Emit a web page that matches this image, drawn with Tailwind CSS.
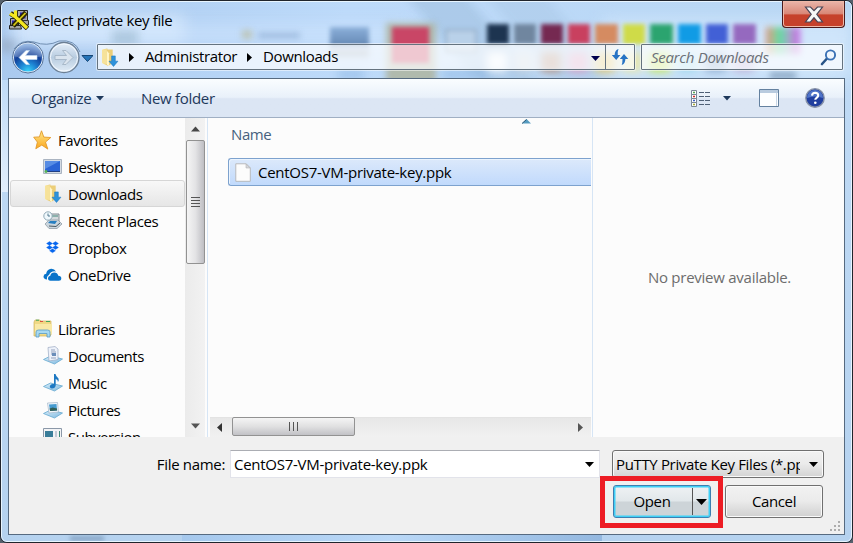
<!DOCTYPE html>
<html lang="en">
<head>
<meta charset="utf-8">
<title>Select private key file</title>
<script src="https://cdn.jsdelivr.net/npm/@tailwindcss/browser@4"></script>
</head>
<body class="overflow-hidden bg-[#55606c]">
<svg width="0" height="0" class="absolute">
  <defs>
    <linearGradient id="fold" x1="0" x2="1"><stop offset="0" stop-color="#fbeeb0"/><stop offset="1" stop-color="#e2bf60"/></linearGradient>
    <linearGradient id="gold" x1="0" x2="0" y2="1"><stop offset="0" stop-color="#ffe98c"/><stop offset="1" stop-color="#fba61c"/></linearGradient>
    <linearGradient id="tray" x1="0" x2="1" y2="1"><stop offset="0" stop-color="#d8eefa"/><stop offset="1" stop-color="#7fb8df"/></linearGradient>
    <radialGradient id="orb" cx=".5" cy="1" r=".95"><stop offset="0" stop-color="#38d6fb"/><stop offset=".35" stop-color="#1c7fd0"/><stop offset=".65" stop-color="#123f97"/><stop offset="1" stop-color="#7ba4dc"/></radialGradient>
    <linearGradient id="clear" x1="0" x2="0" y2="1"><stop offset="0" stop-color="#e7f0fa"/><stop offset=".5" stop-color="#b8cce0"/><stop offset="1" stop-color="#e2edf7"/></linearGradient>
    <symbol id="download" viewBox="0 0 18 18">
      <path d="M2 1.500 7 .5v16l-5-2z" fill="url(#fold)"/>
      <path d="M6.500 1.500H12v13L7 17.300z" fill="#ecce78"/>
      <path d="M2 1.800 6.500 1v14.500L2 14z" fill="#f6e29a"/>
      <path d="M6.500 2.500 8.500 5v12l-2-1z" fill="#fff5c8"/>
      <path d="M11 7.500h3.500v5H17L12.800 17.500 8.500 12.500H11z" fill="#2e93dc" stroke="#1b78bd" stroke-width=".5"/>
    </symbol>
  </defs>
</svg>
<div class="relative flex h-[543px] w-[853px] flex-col overflow-hidden rounded-[7px] border border-[#20242c] bg-[#bcd8f4] font-['Open_Sans','Segoe_UI',sans-serif] text-[15px] leading-[20px] tracking-[-0.36px] text-black">
  <!-- frosted glass frame with the blurred toolbar behind it -->
  <div class="absolute inset-0 overflow-hidden rounded-[6px] border border-[#e8f5ff] bg-linear-to-b from-[#b4d3f4] via-[#bfdaf5] via-10% to-[#b5d2ef]">
    <div class="absolute left-0 top-0 h-[78px] w-full bg-linear-[100deg] from-[#a9c9ee] from-0% via-[#bddafa] via-40% to-[#b9d7f3]"></div>
    <div class="absolute left-[430px] top-[-30px] h-[110px] w-[60px] skew-x-[40deg] bg-[#9bbcdc]/50 blur-[6px]"></div>
    <div class="absolute left-[510px] top-[-30px] h-[110px] w-[60px] skew-x-[40deg] bg-[#a5c4e2]/40 blur-[6px]"></div>
    <div class="absolute left-[600px] top-[18px] h-[60px] w-[250px] bg-[#d5e8fc]/80 blur-[8px]"></div>
    <div class="absolute left-[12px] top-[14px] h-[26px] w-[170px] bg-[#deedfe]/80 blur-[8px]"></div>
    <div class="absolute left-[12px] top-[22px] h-[20px] w-[400px] bg-[#d0e5fd]/60 blur-[8px]"></div>
    <div class="absolute left-[-2px] top-[37px] h-[13px] w-[15px] bg-[#8b97a9]/50 blur-[5px]"></div>
    <div class="absolute left-[110px] top-[28px] h-[16px] w-[26px] bg-[#a3bfd6]/70 blur-[4px]"></div>
    <div class="absolute left-[240px] top-[28px] h-[9px] w-[10px] bg-[#b7b68f]/60 blur-[3px]"></div>
    <div class="absolute left-[256px] top-[31px] h-[5px] w-[42px] bg-[#7b9dc6]/60 blur-[3px]"></div>
    <div class="absolute left-[328px] top-[25px] h-[20px] w-[39px] bg-linear-to-b from-[#8cb0da] to-[#6387b3] blur-[2px]"></div>
    <div class="absolute left-[328px] top-[47px] h-[8px] w-[39px] bg-[#91a1b1]/80 blur-[3px]"></div>
    <div class="absolute left-[384px] top-[21px] h-[62px] w-[50px] bg-[#acb19a]/80 blur-[3px]"></div>
    <div class="absolute left-[390px] top-[25px] h-[36px] w-[37px] bg-[#c94666] blur-[2px]"></div>
    <div class="absolute left-[443px] top-[27px] h-[24px] w-[32px] border-2 border-[#829cb8]/60 bg-[#bdd2e9]/80 blur-[2px]"></div>
    <div class="absolute left-[336px] top-[69px] h-[7px] w-[26px] bg-[#81addd]/60 blur-[4px]"></div>
    <div class="absolute left-[440px] top-[69px] h-[7px] w-[50px] bg-[#81addd]/60 blur-[4px]"></div>
    <div class="absolute left-[485px] top-[50px] flex gap-[7px] blur-[4px]">
      <i class="h-5 w-[20px] bg-[#eff6fd]"></i><i class="h-5 w-[20px] bg-[#c9d6e3]"></i><i class="h-5 w-[20px] bg-[#b79787]"></i><i class="h-5 w-[20px] bg-[#d9a3c5]"></i><i class="h-5 w-[20px] bg-[#e2c870]"></i><i class="h-5 w-[20px] bg-[#e6e7b0]"></i><i class="h-5 w-[21px] bg-[#c5e85f]"></i><i class="h-5 w-[21px] bg-[#a1d8ec]"></i><i class="h-5 w-[21px] bg-[#8faed1]"></i><i class="h-5 w-[21px] bg-[#bcb4d9]"></i>
    </div>
    <div class="absolute left-[485px] top-[22px] flex gap-[5px] blur-[2px]">
      <i class="h-[20px] w-[22px] bg-[#1d3450]"></i><i class="h-[20px] w-[22px] bg-[#70869f]"></i><i class="h-[20px] w-[22px] bg-[#752951]"></i><i class="h-[20px] w-[22px] bg-[#c9405f]"></i><i class="h-[20px] w-[23px] bg-[#d58b61]"></i><i class="h-[20px] w-[22px] bg-[#cfdb48]"></i><i class="h-[20px] w-[23px] bg-[#2ba46f]"></i><i class="h-[20px] w-[23px] bg-[#109be5]"></i><i class="h-[20px] w-[22px] bg-[#4260d6]"></i><i class="h-[20px] w-[23px] bg-[#9569bf]"></i>
    </div>
    <div class="absolute left-[764px] top-[25px] h-[27px] w-[34px] bg-linear-to-r from-[#d9917e] via-[#54dda3] via-40% to-[#c95ce6] blur-[3px]"></div>
    <div class="absolute left-[768px] top-[70px] h-[7px] w-[26px] bg-[#7d9ab8]/80 blur-[3px]"></div>
    <div class="absolute left-0 top-[78px] h-[112px] w-[8px] bg-linear-to-b from-[#c0dbf6] to-[#e1eefc]"></div>
    <div class="absolute bottom-0 left-[68px] h-[5px] w-[34px] bg-[#7e9cbd]/80 blur-[2px]"></div>
    <div class="absolute bottom-0 left-[180px] h-[8px] w-[420px] bg-linear-to-r from-[#9fc4ec] via-[#bbdafa] to-[#86add9] opacity-70"></div>
  </div>

  <header class="relative h-[77px] shrink-0">
    <div class="flex h-[38px] items-start justify-between">
      <div class="flex h-[38px] items-center gap-[5px] pl-[8px]">
        <svg width="20" height="20" viewBox="0 0 20 20">
          <path d="M8.500 .5h10V10.500h-10z" fill="#a9a9ae" stroke="#222"/><path d="M11 2.500h5.500v6H11z" fill="#2323b8"/>
          <path d="M1.500 8.500h8v8h-8z" fill="#a9a9ae" stroke="#222"/><path d="M3 10.500h4v4H3z" fill="#2323b8"/>
          <path d="M.500 15.500h11l1 3.500H.500z" fill="#a4a4a4" stroke="#222"/><path d="M11.500 10.500h8V15h-7z" fill="#a4a4a4" stroke="#333"/>
          <path d="M5 5.500 18.500 18.500M17 2.500 4 16M1.500 3.500 5 5.500" fill="none" stroke="#2b2604" stroke-width="5"/>
          <path d="M16.500 3 4.500 15.500" stroke="#d9cb18" stroke-width="1.800"/>
          <path d="M5 5.500 18 18M1 3.500 5.500 6.500M6.500 .5V6" fill="none" stroke="#f4e71e" stroke-width="3.200"/>
        </svg>
        <h1 class="tracking-[-0.36px]">Select private key file</h1>
      </div>
      <button class="mr-[7px] flex h-[27px] w-[63px] items-center justify-center rounded-b-[4px] border border-t-0 border-[#4a1a1c] bg-linear-to-b from-[#e9b5aa] from-0% via-[#d98878] via-48% to-[#c6412b] to-54% shadow-[inset_0_0_0_1px_#eeb9a8]">
        <svg width="20" height="17" viewBox="0 0 20 17"><path d="M1.500 1h5L10 4.700 13.500 1h5l-5.700 7.300 5.700 7.700h-5L10 11.800 6.500 16h-5l5.700-7.700z" fill="#f7f7f7" stroke="#4b4657" stroke-width="1.200"/></svg>
      </button>
    </div>
    <div class="flex items-start pl-[10px]">
      <svg class="-mt-px" width="82" height="36" viewBox="0 0 82 36">
        <path d="M3 11Q10 1 23 4Q36 9 48 3Q64 1 69 14" fill="none" stroke="#718fb2" stroke-width="1"/>
        <circle cx="17" cy="19.500" r="15.500" fill="#dce9f7" stroke="#577399"/><circle cx="17" cy="19.500" r="14" fill="url(#orb)"/>
        <path d="M3.500 18.500a13.500 13.500 0 0 1 27 0Q17 21 3.500 18.500z" fill="#fff" opacity=".22"/>
        <path d="M8 19.500 15 12.500h3.500L14.500 17.500H26v4H14.500l4 5H15z" fill="#fff" stroke="#c5dcf4" stroke-width=".6"/>
        <circle cx="53" cy="19.500" r="15" fill="url(#clear)" stroke="#6c7f94" stroke-width="1.300"/><circle cx="53" cy="19.500" r="13.600" fill="none" stroke="#f4f9ff"/>
        <path d="M62 19.500 55 12.500h-3.500l4 5H44v4h11.500l-4 5H55z" fill="#dae4ee" stroke="#a4b4c5" stroke-width=".9"/>
        <path d="M71 17.500h11l-5.500 6z" fill="#2675b9" stroke="#174776"/>
      </svg>
      <div class="ml-[4px] mt-[5px] flex h-[26px] w-[538px] rounded-[1px] border border-[#65737f] bg-white/70 shadow-[0_0_0_1px_#ffffff80]">
        <div class="flex flex-1 items-center whitespace-nowrap">
          <svg class="ml-[2px] shrink-0" width="19" height="19"><use href="#download"/></svg>
          <svg class="ml-[10px]" width="5" height="9"><path d="M0 0 5 4.500 0 9z"/></svg>
          <span class="-mt-0.5 ml-[11px] w-[91px]">Administrator</span>
          <svg class="ml-[11px]" width="5" height="9"><path d="M0 0 5 4.500 0 9z"/></svg>
          <span class="-mt-0.5 ml-[11px]">Downloads</span>
          <svg class="ml-auto mr-[5px] mt-0.5" width="9" height="5"><path d="M0 0h9L4.500 5z" fill="#00004d"/></svg>
        </div>
        <div class="flex w-[29px] items-center justify-center border-l border-[#65737f]">
          <svg width="18" height="18" viewBox="0 0 18 18"><path d="M7.500 1Q3.800 2 3.600 7H.800l4.400 5 4.200-5H6.800Q6.600 3 7.500 1zM10.700 17q3.500-1 3.700-6H17.300L13 6 8.800 11h2.700q0 4-.8 6z" fill="#2673c4"/></svg>
        </div>
      </div>
      <div class="ml-[6px] mt-[5px] flex h-[26px] w-[202px] items-center justify-between rounded-[1px] border border-[#65737f] bg-white/70 pl-[9px] pr-[5px] shadow-[0_0_0_1px_#ffffff80]">
        <span class="italic text-[#6b7078] tracking-[-0.3px]">Search Downloads</span>
        <svg width="17" height="17" viewBox="0 0 17 17"><path d="M2 15 7 9.500" stroke="#285487" stroke-width="2.600" stroke-linecap="round"/><circle cx="10.500" cy="6" r="4.600" fill="#eff6fe" stroke="#3a71b5" stroke-width="1.900"/></svg>
      </div>
    </div>
  </header>

  <main class="relative ml-[7px] flex h-[457px] w-[837px] flex-col border border-[#566a80] bg-[#f0f0f0]">
    <nav class="flex h-[39px] shrink-0 items-center border-b border-[#a0afc3] bg-linear-to-b from-[#fafdff] from-0% via-[#e9f1fa] via-48% to-[#dce6f4] to-52% pl-[22px] tracking-[-0.3px] text-[#1e395b]">
      <span class="w-[60px]">Organize</span>
      <svg class="ml-[5px] shrink-0" width="8" height="5"><path d="M0 0h8L4 4.500z" fill="#1e395b"/></svg>
      <span class="ml-[37px]">New folder</span>
      <svg class="ml-auto" width="20" height="17" viewBox="0 0 20 17">
        <path d="M.500.500h5v4h-5zM.500 4.500h5v4h-5zM.500 8.500h5v4h-5zM.500 12.500h5v4h-5z" fill="#fff" stroke="#7b8796"/>
        <path d="M2 2.500h2" stroke="#56a855" stroke-width="1.500"/><path d="M2 6.500h2" stroke="#d52b2b" stroke-width="1.500"/><path d="M2 10.500h2" stroke="#3c62c9" stroke-width="1.500"/><path d="M2 14.500h2" stroke="#a8ad37" stroke-width="1.500"/>
        <path d="M8 2.500h5m1 0h5M8 6.500h5m1 0h5M8 10.500h5m1 0h5M8 14.500h5m1 0h5" stroke="#4f6076" stroke-width="1"/>
      </svg>
      <svg class="ml-[12px]" width="8" height="5"><path d="M0 0h8L4 4.500z" fill="#1e395b"/></svg>
      <svg class="ml-[28px]" width="20" height="18" viewBox="0 0 20 18"><path d="M.500.500h19v17H.500z" fill="#fdfeff" stroke="#64819f"/><path d="M1 1h18v3H1z" fill="#b9cbdf"/><path d="M17.500 4v13" stroke="#c8d6e6"/></svg>
      <svg class="ml-[26px] mr-[19px]" width="20" height="20" viewBox="0 0 20 20"><circle cx="10" cy="10" r="9.200" fill="#203f9f" stroke="#8792a8" stroke-width="1.400"/><path d="M2 10a8 8 0 0 1 16 0Q10 7 2 10z" fill="#6a90df" opacity=".65"/><path d="M7 7.600Q7.200 4.700 10.200 4.700q3 .1 3 2.600 0 1.500-1.600 2.500-1.300.8-1.300 2" fill="none" stroke="#fff" stroke-width="2.100"/><circle cx="10.300" cy="14.700" r="1.300" fill="#fff"/></svg>
    </nav>

    <section class="flex h-[319px] shrink-0 overflow-hidden bg-[#fcfcfc]">
      <aside class="h-full w-[176px] overflow-hidden pt-[8px] tracking-[-0.42px]">
        <div class="flex h-[27px] items-center gap-[6px] pl-[24px]"><svg width="19" height="20" viewBox="0 0 19 20"><path d="m8.500.800 2.300 6.300 7 .4-5.300 4.600 2.300 7-6-4-6 3.600 1.600-6.600L.700 7.200l5.700-.3z" fill="url(#gold)" stroke="#e2982a" stroke-width=".9"/></svg>Favorites</div>
        <div class="flex h-[27px] items-center gap-[6px] pl-[34px]"><svg width="19" height="16" viewBox="0 0 19 16"><path d="M.500.500h18v14h-18z" fill="#d4dbe4" stroke="#aab4c1"/><path d="M2 2h15v11H2z" fill="#2b64d5"/><path d="M2 2h15L2 10z" fill="#6fa1ed" opacity=".65"/><path d="M2 12.500h15" stroke="#213f83"/><circle cx="3" cy="12.500" r="1.400" fill="#55b353"/></svg>Desktop</div>
        <div class="ml-px flex h-[27px] w-[175px] items-center gap-[6px] rounded-[3px] border border-[#d6d6d6] bg-linear-to-b from-[#f8f8f8] to-[#e6e6e6] pl-[32px]"><svg width="19" height="19"><use href="#download"/></svg>Downloads</div>
        <div class="flex h-[27px] items-center gap-[6px] pl-[34px]"><svg width="19" height="19" viewBox="0 0 19 19"><path d="M7 3h9v8H7z" fill="#d5dadd" stroke="#838d94"/><path d="M8 5h7" stroke="#40877b"/><path d="m2 13 4-4h9l4 4-5 4.500H6z" fill="#cbd6de" stroke="#87939d" stroke-width=".7"/><path d="m5 12 2-2h7l-2 3z" fill="#287fc1"/><path d="m6 15 7 .5 4-3.500" stroke="#4c5962" fill="none"/><circle cx="5" cy="5" r="4.200" fill="#eff8fc" stroke="#91a9b6"/><path d="M5 2.500V5h2" stroke="#53788d" fill="none"/></svg>Recent Places</div>
        <div class="flex h-[27px] items-center gap-[6px] pl-[34px]"><svg width="19" height="16" viewBox="0 0 19 16"><path d="m6.500 1.500 3 2-3 2-3-2zm6 0 3 2-3 2-3-2zm-6 4 3 2-3 2-3-2zm6 0 3 2-3 2-3-2zM9.500 8.800l3 2-3 2-3-2z" fill="#0766ee" stroke="#0766ee" stroke-width=".3"/></svg>Dropbox</div>
        <div class="flex h-[27px] items-center gap-[6px] pl-[34px]"><svg width="19" height="14" viewBox="0 0 19 14"><path d="M4 11.500Q.500 11.200.500 8.500.600 6 3.200 5.700 3.700 2 7 1q4-.800 6 2.500Q8 2.500 6 7 3.500 8 4 11.500z" fill="#0873ca"/><path d="M7.500 12.800Q4.800 12.500 5 10 5.300 8 7.300 7.800 8 4.500 11.300 4.500q3 0 4 3.300 3 .2 3 2.500 0 2.500-2.500 2.500z" fill="#0873ca"/></svg>OneDrive</div>
        <div class="h-[27px]"></div>
        <div class="flex h-[27px] items-center gap-[5px] pl-[24px]"><svg width="20" height="19" viewBox="0 0 20 19"><path d="M1 3 2 1h5l1 1h10v14l-1 1H1z" fill="#f0d984" stroke="#d0b35c" stroke-width=".7"/><path d="M3 1.200h3M13 2.500h4" stroke="#41a85b"/><path d="M7 2.500h3" stroke="#db5040"/><path d="M2 5h17v10H2z" fill="#f9e9a6"/><path d="M3 18v-5q0-2 2.500-2h9q2.500 0 2.500 2v5h-3v-3.500H6V18z" fill="#a7d9f1" stroke="#569bc6" stroke-width=".8"/></svg>Libraries</div>
        <div class="flex h-[27px] items-center gap-[5px] pl-[34px] tracking-[-0.5px]"><svg width="20" height="19" viewBox="0 0 20 19"><path d="m.500 13.500 7-3.500 12 3-8 5z" fill="url(#tray)" stroke="#66a9d0" stroke-width=".8"/><path d="m5 1.500 7-1 3 2.500v10.500L6 15z" fill="#eef2fa" stroke="#9ba9c2" stroke-width=".7"/><path d="M8 4h4M8 6h5M8 8h1M8 12h5" stroke="#92a1bd"/><path d="M9 7h4v3H9z" fill="#6a8db9"/></svg>Documents</div>
        <div class="flex h-[27px] items-center gap-[5px] pl-[34px]"><svg width="20" height="19" viewBox="0 0 20 19"><path d="m.500 13.500 7-3.500 12 3-8 5z" fill="url(#tray)" stroke="#66a9d0" stroke-width=".8"/><path d="M11 1h1.500q.500 2.500 3 4.500.700 2-.500 3.500Q15 6.500 12.700 6v6.500q-.5 3-3.700 3-2.800-.500-2-2.800 1-2.300 4-1.700z" fill="#1d78c2"/></svg>Music</div>
        <div class="flex h-[27px] items-center gap-[5px] pl-[34px] tracking-[-0.5px]"><svg width="20" height="19" viewBox="0 0 20 19"><path d="m.500 13.500 7-3.500 12 3-8 5z" fill="url(#tray)" stroke="#66a9d0" stroke-width=".8"/><path d="m4.500 3 10-.500 1 9.500-9.500 1z" fill="#f2f7fc" stroke="#a2b4c7" stroke-width=".7"/><path d="m6 4.500 7.500-.5.600 6.500-7 .5z" fill="#469bd0"/><path d="m6.600 8.500 3-1 4.400 1 .1 2-7 .5z" fill="#315f57"/></svg>Pictures</div>
        <div class="flex h-[27px] items-center gap-[6px] pl-[34px] tracking-[-0.5px]"><svg width="19" height="18" viewBox="0 0 19 18"><path d="M.500.500h18v17H.500z" fill="#f3f4f6" stroke="#8b98a8"/><path d="M2 3h8v12H2z" fill="#397d99"/><path d="M12 3h2v12h-2z" fill="#c4cad6"/><path d="M16 3h1v12h-1z" fill="#3d8978"/></svg>Subversion</div>
      </aside>
      <div class="flex w-[20px] flex-col items-center bg-linear-to-r from-[#ebebeb] to-[#f2f2f2]">
        <svg class="my-[8px] shrink-0" width="9" height="6"><path d="M0 5.500 4.500.5 9 5.500z" fill="#474747"/></svg>
        <div class="flex h-[124px] w-[19px] shrink-0 flex-col items-center justify-center gap-[2px] rounded-[2px] border border-[#929292] bg-linear-to-r from-[#f5f5f5] via-[#e3e3e5] via-50% to-[#bebec3]"><i class="h-px w-[9px] bg-[#555]"></i><i class="h-px w-[9px] bg-[#555]"></i><i class="h-px w-[9px] bg-[#555]"></i><i class="h-px w-[9px] bg-[#555]"></i></div>
        <svg class="mb-[8px] mt-auto shrink-0" width="9" height="6"><path d="M0 .5h9L4.500 5.500z" fill="#555"/></svg>
      </div>
      <div class="ml-[2px] flex w-[385px] flex-col border-l border-[#d6e5f5]">
        <div class="relative h-[40px] shrink-0 pl-[23px] pt-[6px] tracking-[-0.4px] text-[#47617e]">Name
          <svg class="absolute left-[314px] top-[1px]" width="9" height="5"><path d="M0 4.500 4.500 0 9 4.500z" fill="#559bc0"/><path d="M0 4.500 4.500.5" stroke="#2b5878"/></svg>
        </div>
        <div class="ml-[20px] mr-px flex h-[28px] shrink-0 items-center rounded-l-[3px] border border-r-0 border-[#7da2ce] bg-linear-to-b from-[#dce9fb] to-[#c1dafc] pl-[6px] tracking-[-0.27px] shadow-[inset_1px_1px_0_#ebf4fe]">
          <svg class="shrink-0" width="16" height="19" viewBox="0 0 16 19"><path d="M.800.800h10.500l4 4v13.500H.800z" fill="#fcfcfc" stroke="#b3b4b6" stroke-width=".9"/><path d="M11 1v4h4z" fill="#d6d8dc" stroke="#b3b4b6" stroke-width=".6"/></svg>
          <span class="ml-[7px] whitespace-nowrap">CentOS7-VM-private-key.ppk</span>
        </div>
        <div class="ml-[2px] mr-[1px] mt-auto flex h-[20px] items-center border-t border-[#e3e3e3] bg-linear-to-b from-[#e7e7e7] to-[#f1f1f1]">
          <svg class="ml-[7px]" width="5" height="9"><path d="M5 0v9L0 4.500z" fill="#333"/></svg>
          <div class="-mt-[2px] ml-[10px] flex h-[19px] w-[123px] items-center justify-center gap-[3px] rounded-[2px] border border-[#929292] bg-linear-to-b from-[#f5f5f5] via-[#e0e0e1] via-50% to-[#c2c2c6]"><i class="h-[9px] w-px bg-[#555]"></i><i class="h-[9px] w-px bg-[#555]"></i><i class="h-[9px] w-px bg-[#555]"></i></div>
          <svg class="ml-auto mr-[8px]" width="5" height="9"><path d="M0 0v9l5-4.500z" fill="#555"/></svg>
        </div>
      </div>
      <div class="flex flex-1 items-center justify-center border-l border-[#d6e5f5] pb-[2px] tracking-[-0.26px] text-[#6d6d6d]"><span class="ml-[2px] whitespace-nowrap">No preview available.</span></div>
    </section>

    <footer class="relative flex-1 pt-[13px]">
      <div class="flex h-[28px] items-center tracking-[-0.27px]">
        <label class="w-[221px] pr-[5px] text-right tracking-[-0.32px]">File name:</label>
        <div class="flex h-[28px] w-[370px] items-center justify-between border border-[#e2e3ea] border-t-[#abadb3] bg-white pl-[3px] pr-[5px]"><span>CentOS7-VM-private-key.ppk</span><svg width="9" height="5"><path d="M0 0h9L4.500 5z"/></svg></div>
        <div class="ml-[12px] flex h-[28px] w-[212px] items-center rounded-[3px] border border-[#707070] bg-linear-to-b from-[#f2f2f2] from-0% via-[#ebebeb] via-48% to-[#d3d3d3] pl-[3px] tracking-[-0.35px] shadow-[inset_0_0_0_1px_#fafafa]"><span class="w-[184px] overflow-hidden whitespace-nowrap">PuTTY Private Key Files (*.ppk)</span><svg class="ml-[9px] shrink-0" width="9" height="5"><path d="M0 0h9L4.500 5z"/></svg></div>
      </div>
      <div class="mt-[7px] flex gap-[14px] pl-[604px]">
        <button class="flex h-[33px] w-[98px] items-center rounded-[3px] border border-[#3c7fb1] bg-linear-to-b from-[#eff2f4] from-0% via-[#e1e7ea] via-49% to-[#cdd4d8] to-51% shadow-[inset_0_0_0_1.500px_#3fd0f6]"><span class="w-[78px] -translate-x-px pb-[2px] text-center">Open</span><i class="h-[27px] w-px bg-[#555]"></i><svg class="ml-[3px]" width="11" height="6"><path d="M0 0h11L5.500 6z"/></svg></button>
        <button class="h-[33px] w-[98px] rounded-[3px] border border-[#707070] bg-linear-to-b from-[#f2f2f2] from-0% via-[#ebebeb] via-48% to-[#d0d0d0] pb-[2px] shadow-[inset_0_0_0_1px_#fafafa]">Cancel</button>
      </div>
      <svg class="absolute bottom-[2px] right-[3px]" width="11" height="11" fill="#adadad"><path d="M8 0h2v2H8zM4 4h2v2H4zM8 4h2v2H8zM0 8h2v2H0zM4 8h2v2H4zM8 8h2v2H8z"/></svg>
      <div class="absolute left-[591px] top-[39px] h-[52px] w-[123px] border-[5px] border-[#ed1c24]"></div>
    </footer>
  </main>
</div>
</body>
</html>
